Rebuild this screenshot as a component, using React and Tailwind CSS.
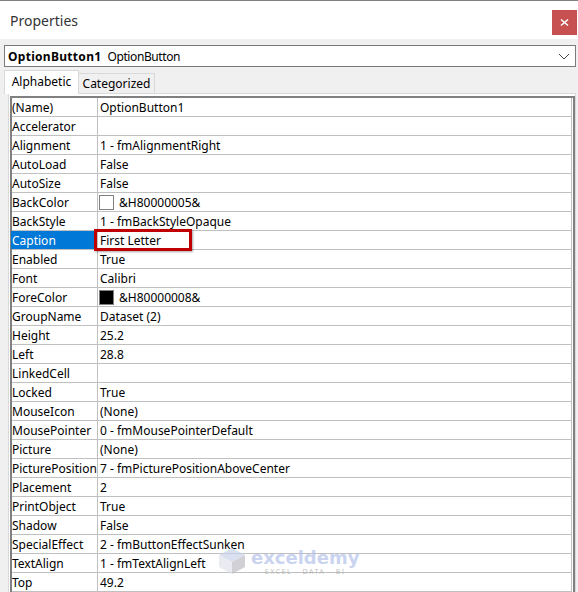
import React from "react";

const rows = [
  ["(Name)", "OptionButton1"],
  ["Accelerator", ""],
  ["Alignment", "1 - fmAlignmentRight"],
  ["AutoLoad", "False"],
  ["AutoSize", "False"],
  ["BackColor", "&H80000005&", "bg-white"],
  ["BackStyle", "1 - fmBackStyleOpaque"],
  ["Caption", "First Letter"],
  ["Enabled", "True"],
  ["Font", "Calibri"],
  ["ForeColor", "&H80000008&", "bg-black"],
  ["GroupName", "Dataset (2)"],
  ["Height", "25.2"],
  ["Left", "28.8"],
  ["LinkedCell", ""],
  ["Locked", "True"],
  ["MouseIcon", "(None)"],
  ["MousePointer", "0 - fmMousePointerDefault"],
  ["Picture", "(None)"],
  ["PicturePosition", "7 - fmPicturePositionAboveCenter"],
  ["Placement", "2"],
  ["PrintObject", "True"],
  ["Shadow", "False"],
  ["SpecialEffect", "2 - fmButtonEffectSunken"],
  ["TextAlign", "1 - fmTextAlignLeft"],
  ["Top", "49.2"],
];

function Row({ name, value, swatch }) {
  const selected = name === "Caption";
  return (
    <div className="flex h-[19px] border-b border-r border-[#c0c0c0]">
      <div className={`w-[86px] shrink-0 overflow-hidden whitespace-nowrap border-r border-[#c0c0c0] leading-[20px] ${selected ? "-ml-[1px] w-[87px] bg-[#0078d7] pl-[1px] text-white" : ""}`}>
        {name}
      </div>
      <div className="relative flex min-w-0 flex-1 items-center pl-[2px] leading-[20px]">
        {swatch && <span className={`-ml-[1px] mr-[5px] h-[15px] w-[15px] shrink-0 border border-[#808080] ${swatch}`} />}
        <span className="whitespace-nowrap pt-[2px]">{value}</span>
        {selected && (
          <span className="absolute left-[-4px] top-[-2px] h-[22px] w-[98px] border-[3px] border-[#c00000] shadow-[1px_1px_2px_rgba(0,0,0,0.35)]" />
        )}
      </div>
    </div>
  );
}

export default function App() {
  return (
    <div className="relative h-[592px] w-[578px] overflow-hidden bg-[#f0f0f0] font-['Noto_Sans',sans-serif] text-[12px] text-black">
      <div className="h-[1px] bg-[#808080]" />
      <div className="flex h-[38px] items-start justify-between bg-white pl-[10px]">
        <span className="mt-[10px] text-[14px] leading-[20px] text-[#333]">Properties</span>
        <button className="mr-[1px] mt-[9px] flex h-[25px] w-[25px] items-center justify-center bg-[#c75050] text-white">
          <svg width="9" height="9" viewBox="0 0 9 9" fill="none" stroke="currentColor" strokeWidth="1.6">
            <path d="M1 1.5 8 7.5M8 1.5 1 7.5" />
          </svg>
        </button>
      </div>

      <div className="ml-[4px] mr-[2px] mt-[6px] flex h-[22px] items-center justify-between border border-[#7a7a7a] bg-white pl-[3px] pr-[5px]">
        <span className="whitespace-nowrap pt-[1px]">
          <b className="font-bold tracking-[0.3px]">OptionButton1</b>
          <span className="ml-[6px] tracking-[-0.4px]">OptionButton</span>
        </span>
        <svg width="12" height="7" viewBox="0 0 12 7" fill="none" stroke="#444" strokeWidth="1">
          <path d="M1 1l5 5 5-5" />
        </svg>
      </div>

      <div className="mt-[3px] flex h-[23px] items-end pl-[4px]">
        <div className="z-10 -mb-[1px] flex h-[24px] w-[75px] items-center justify-center border border-b-0 border-[#d9d9d9] bg-white pb-[1px]">Alphabetic</div>
        <div className="flex h-[20px] w-[76px] items-center justify-center border border-b-0 border-l-0 border-[#d9d9d9] bg-[#f0f0f0]">Categorized</div>
      </div>

      <div className="ml-[8px] mr-[2px] h-[500px] border border-b-0 border-[#d9d9d9] bg-white pl-[1px] pt-[2px]">
        <div className="h-full border-l-2 border-r-2 border-t-2 border-[#808080] bg-white pr-[1px]">
          {rows.map(([name, value, swatch]) => (
            <Row key={name} name={name} value={value} swatch={swatch} />
          ))}
        </div>
      </div>

      {/* watermark */}
      <div className="pointer-events-none absolute left-[218px] top-[547px] flex items-start gap-[5px] opacity-70">
        <svg width="28" height="28" viewBox="0 0 28 28">
          <path d="M14 1 27 8 14 15 1 8z" fill="#c9d3ea" />
          <path d="M1 8 14 15V27L1 20z" fill="#e0e3ea" />
          <path d="M27 8 14 15V27L27 20z" fill="#bdbdc4" />
        </svg>
        <div className="flex flex-col items-center">
          <span className="h-[21px] font-['DejaVu_Sans',sans-serif] text-[18px] font-bold leading-[21px] text-[#b4c3ea]">exceldemy</span>
          <span className="text-[7px] leading-[8px] tracking-[1.5px] text-[#a8a8a8]">EXCEL - DATA - BI</span>
        </div>
      </div>
    </div>
  );
}
